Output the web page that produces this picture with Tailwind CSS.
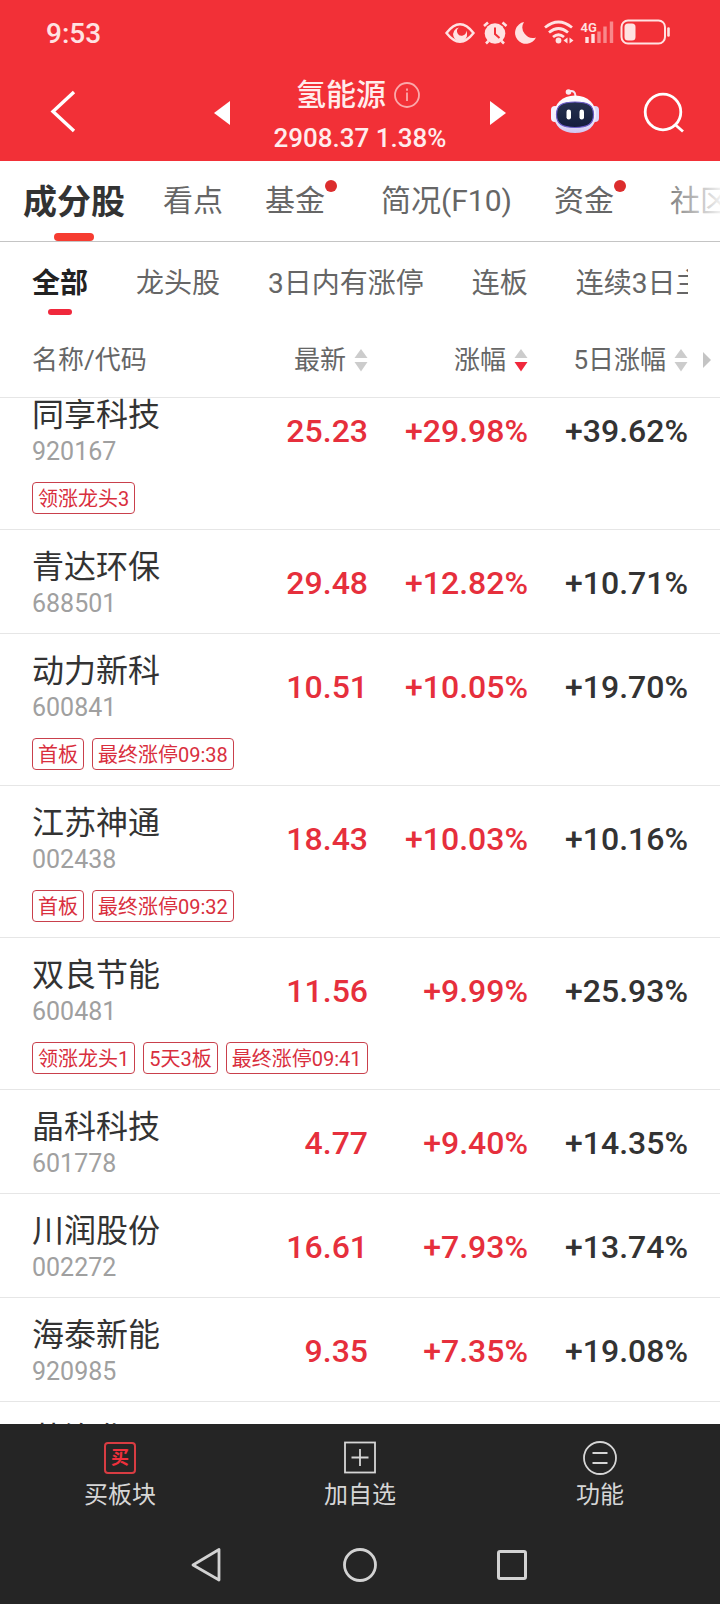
<!DOCTYPE html>
<html lang="zh-CN">
<head>
<meta charset="utf-8">
<meta name="viewport" content="width=device-width, initial-scale=1">
<title>氢能源</title>
<script src="https://cdn.jsdelivr.net/npm/@tailwindcss/browser@4"></script>
</head>
<body class="flex h-screen flex-col overflow-hidden bg-white font-['Roboto','Noto_Sans_CJK_SC',sans-serif] text-[#333]">

<header class="shrink-0 bg-[#f23037] text-[#ffecec]">
  <!-- status bar -->
  <div class="flex h-16 items-center justify-between pt-1 pr-[50px] pl-[46px]">
    <time class="text-[28px] leading-8 font-medium text-[#ffe2e2]">9:53</time>
    <svg class="h-8 w-[226px]" viewBox="444 18 226 32" fill="none" stroke="#ffe2e2" aria-label="状态图标">
      <path d="M446.500 33Q460 15.500 473.500 33Q460 50.500 446.500 33Z" stroke-width="2.400"/>
      <path d="M459 27.500a7 7 0 1 0 7 3a4.500 4.500 0 1 1-7-3Z" fill="#ffe2e2" stroke="none"/>
      <circle cx="495" cy="33.500" r="10.300" fill="#ffe2e2" stroke="none"/>
      <path d="M484 26l4-3.500M506.500 26l-4-3.500M488.500 41l-2.500 2.500M501.500 41l2.500 2.500" stroke-width="2.600"/>
      <path d="M495 27.500v6.500l4.500 4" stroke="#f23037" stroke-width="2"/>
      <path d="M524 22a11 11 0 1 0 12 15.500a10.500 10.500 0 0 1-12-15.500Z" fill="#ffe2e2" stroke="none"/>
      <path d="M545 27.500Q558.500 16.500 572 27.500M549 32.500Q558.500 24.500 568 32.500M553 37Q558.500 32.500 564 37" stroke-width="2.800"/>
      <circle cx="558.500" cy="40.500" r="2.900" fill="#ffe2e2" stroke="none"/>
      <path d="M567.500 37.500v6l-4-3ZM569.500 37.500v6l4-3Z" fill="#ffe2e2" stroke="none"/>
      <text x="580.500" y="32" font-size="13" font-weight="600" fill="#ffe2e2" stroke="none">4G</text>
      <path d="M587 37v6M593 34v9" stroke-width="3.400"/>
      <path d="M599 31.500v11.500M605 26.500v16.500M611.500 21.500v21.500" stroke="#f8888b" stroke-width="3.400"/>
      <rect x="621.500" y="20.500" width="43.500" height="23" rx="6.500" stroke-width="2"/>
      <rect x="624.500" y="23.500" width="11" height="17" rx="3.500" fill="#ffe2e2" stroke="none"/>
      <path d="M668.500 28.500v7" stroke-width="2.600" stroke-linecap="round"/>
    </svg>
  </div>
  <!-- title bar -->
  <div class="grid h-[97px] grid-cols-[1fr_auto_1fr] items-start">
    <button class="mt-6 ml-12 h-12 w-8" aria-label="返回">
      <svg class="h-12 w-8" viewBox="0 0 32 48" fill="none" stroke="#fff" stroke-width="3.400"><path d="M26 4L5 23.500L26 43"/></svg>
    </button>
    <div class="flex items-start">
      <button class="mt-[37px] mr-[42px] h-6 w-4" aria-label="上一个"><svg class="h-6 w-4" viewBox="0 0 16 24" fill="#fff"><path d="M16 0V24L0 12Z"/></svg></button>
      <div class="flex w-44 flex-col items-center">
        <h1 class="mt-[13px] ml-6 flex items-center gap-2 self-start text-[30px] leading-9 font-medium">
          氢能源
          <svg class="size-[26px]" viewBox="0 0 26 26" fill="none" stroke="#fba9ab" stroke-width="1.800" aria-label="说明"><circle cx="13" cy="13" r="12"/><path d="M13 10.500v8.500M13 6.500v2.200"/></svg>
        </h1>
        <p class="mt-[9px] text-[26px] leading-8 font-medium whitespace-nowrap">2908.37 1.38%</p>
      </div>
      <button class="mt-[37px] ml-[42px] h-6 w-4" aria-label="下一个"><svg class="h-6 w-4" viewBox="0 0 16 24" fill="#fff"><path d="M0 0V24L16 12Z"/></svg></button>
    </div>
    <div class="mt-[22px] flex items-start justify-end gap-[42px] pr-[34px]">
      <button class="h-12 w-[50px]" aria-label="智能助手">
        <svg class="h-12 w-[50px]" viewBox="0 0 50 48" fill="none">
          <defs>
            <linearGradient id="shell" x1="0" y1="0" x2="0" y2="1"><stop offset="0" stop-color="#fff"/><stop offset=".6" stop-color="#f1edfb"/><stop offset="1" stop-color="#cfc6f2"/></linearGradient>
            <linearGradient id="visor" x1="0" y1="0" x2="0" y2="1"><stop offset="0" stop-color="#26314f"/><stop offset="1" stop-color="#141c3c"/></linearGradient>
          </defs>
          <path d="M19 5.500Q25 3.500 25.500 10" stroke="#f5e6f2" stroke-width="2"/>
          <circle cx="18.500" cy="6" r="2.800" fill="#fbe9f0"/>
          <rect x="1" y="20" width="8" height="16" rx="4" fill="#f3f0ff"/>
          <rect x="41" y="20" width="8" height="16" rx="4" fill="#dcd8fb"/>
          <path d="M25 9.500C38 9.500 46 18 46 29S38 47 25 47S4 40 4 29S12 9.500 25 9.500Z" fill="url(#shell)"/>
          <path d="M25 16C38 16 43.500 19 43.500 28.500S38 41.500 25 41.500S6.500 38 6.500 28.500S12 16 25 16Z" fill="url(#visor)" stroke="#6a5ac8" stroke-width="1.200"/>
          <rect x="16.500" y="23.500" width="4.500" height="10" rx="2.200" fill="#fff"/>
          <rect x="29.500" y="23.500" width="4.500" height="10" rx="2.200" fill="#fff"/>
        </svg>
      </button>
      <button class="mt-1 size-11" aria-label="搜索">
        <svg class="size-11" viewBox="0 0 44 44" fill="none" stroke="#fff" stroke-width="2.800"><circle cx="21" cy="22" r="17.800"/><path d="M33 34.500L41 41.500"/></svg>
      </button>
    </div>
  </div>
</header>

<!-- main tabs -->
<nav class="relative flex h-[81px] shrink-0 items-start gap-[42px] overflow-hidden border-b border-[#c4c4c4] pl-[23px] text-[30px] leading-10 whitespace-nowrap text-[#666]">
  <a href="#" class="-mr-1 flex h-20 shrink-0 flex-col items-center justify-between pt-[21px] text-[34px] font-bold text-[#333]">成分股<span class="h-2 w-10 rounded-full bg-[#f63c31]"></span></a>
  <a href="#" class="shrink-0 pt-5">看点</a>
  <a href="#" class="relative shrink-0 pt-5 pr-3.5">基金<i class="absolute top-[19px] right-0.5 size-3 rounded-full bg-[#dc2d2d]"></i></a>
  <a href="#" class="shrink-0 pt-5">简况(F10)</a>
  <a href="#" class="relative shrink-0 pt-5 pr-3.5">资金<i class="absolute top-[19px] right-0.5 size-3 rounded-full bg-[#dc2d2d]"></i></a>
  <a href="#" class="shrink-0 pt-5">社区</a>
  <span class="pointer-events-none absolute inset-y-0 right-0 w-14 bg-linear-to-r from-white/10 to-white/90"></span>
</nav>

<!-- filter tabs -->
<nav class="mx-8 flex h-20 shrink-0 items-start gap-12 overflow-hidden text-[28px] leading-9 whitespace-nowrap text-[#666]">
  <a href="#" class="flex h-[73px] shrink-0 flex-col items-center justify-between pt-6 font-bold text-[#222]">全部<span class="h-1.5 w-6 rounded-sm bg-[#f0283c]"></span></a>
  <a href="#" class="shrink-0 pt-6">龙头股</a>
  <a href="#" class="shrink-0 pt-6">3日内有涨停</a>
  <a href="#" class="shrink-0 pt-6">连板</a>
  <a href="#" class="shrink-0 pt-6">连续3日主力</a>
</nav>

<main class="min-h-0 flex-1 overflow-hidden">
  <table class="w-full table-fixed border-separate border-spacing-0">
    <colgroup><col><col class="w-[160px]"><col class="w-[160px]"><col class="w-[192px]"></colgroup>
    <thead class="text-[26px] leading-8 whitespace-nowrap text-[#666]">
      <tr class="h-[76px]">
        <th class="border-b border-[#e6e6e6] pl-8 text-left font-normal">名称/代码</th>
        <th class="border-b border-[#e6e6e6] font-normal"><button class="ml-auto flex items-center gap-2">最新<svg class="h-6 w-3.5" viewBox="0 0 14 24" fill="#ccc"><path d="M0.500 10L7 1L13.500 10Z"/><path d="M0.500 14L7 23.500L13.500 14Z"/></svg></button></th>
        <th class="border-b border-[#e6e6e6] font-normal" aria-sort="descending"><button class="ml-auto flex items-center gap-2">涨幅<svg class="h-6 w-3.5" viewBox="0 0 14 24" fill="#ccc"><path d="M0.500 10L7 1L13.500 10Z"/><path d="M0.500 14L7 23.500L13.500 14Z" fill="#f0283c"/></svg></button></th>
        <th class="border-b border-[#e6e6e6] pr-2 font-normal"><div class="flex items-center justify-end gap-3.5"><button class="flex items-center gap-2">5日涨幅<svg class="h-6 w-3.5" viewBox="0 0 14 24" fill="#ccc"><path d="M0.500 10L7 1L13.500 10Z"/><path d="M0.500 14L7 23.500L13.500 14Z"/></svg></button><svg class="h-4 w-2.5" viewBox="0 0 10 16" fill="#c4c4c4"><path d="M1 0V16L9 8Z"/></svg></div></th>
      </tr>
    </thead>
    <tbody id="stocks" class="align-top whitespace-nowrap"></tbody>
  </table>
</main>

<footer class="shrink-0 bg-[#252525] text-[#d6d6d6]">
  <div class="grid h-24 grid-cols-3 text-2xl leading-8">
    <button class="flex flex-col items-center gap-1 pt-[17px]">
      <span class="flex size-[34px] items-center justify-center"><span class="flex size-8 items-center justify-center rounded-sm border-2 border-[#d83c42] text-[18px] leading-5 font-bold text-[#f0303c]">买</span></span>买板块</button>
    <button class="flex flex-col items-center gap-1 pt-[17px]">
      <svg class="size-[34px]" viewBox="0 0 34 34" fill="none" stroke="#d6d6d6" stroke-width="1.800"><rect x="2" y="1.500" width="30" height="30"/><path d="M17 8v17M8.500 16.500h17"/></svg>加自选</button>
    <button class="flex flex-col items-center gap-1 pt-[17px]">
      <svg class="size-[34px]" viewBox="0 0 34 34" fill="none" stroke="#d6d6d6" stroke-width="1.800"><circle cx="17" cy="17" r="16"/><path d="M9.500 12h15M9.500 22h15"/></svg>功能</button>
  </div>
  <div class="flex h-[84px] items-center justify-center gap-[117px] pt-1.5">
    <button aria-label="系统返回"><svg class="size-9" viewBox="0 0 36 36" fill="none" stroke="#d2d2d2" stroke-width="2.800" stroke-linejoin="round"><path d="M30 2.500V33L4 18Z"/></svg></button>
    <button aria-label="主屏幕"><svg class="size-9" viewBox="0 0 36 36" fill="none" stroke="#d2d2d2" stroke-width="2.800"><circle cx="18" cy="18" r="15.500"/></svg></button>
    <button aria-label="最近任务"><svg class="size-9" viewBox="0 0 36 36" fill="none" stroke="#d2d2d2" stroke-width="3"><rect x="3.500" y="4.500" width="27" height="27" rx="1.500"/></svg></button>
  </div>
</footer>

<script>
const stocks = [
  ['同享科技', '920167', '25.23', '+29.98%', '+39.62%', ['领涨龙头3']],
  ['青达环保', '688501', '29.48', '+12.82%', '+10.71%', []],
  ['动力新科', '600841', '10.51', '+10.05%', '+19.70%', ['首板', '最终涨停09:38']],
  ['江苏神通', '002438', '18.43', '+10.03%', '+10.16%', ['首板', '最终涨停09:32']],
  ['双良节能', '600481', '11.56', '+9.99%', '+25.93%', ['领涨龙头1', '5天3板', '最终涨停09:41']],
  ['晶科科技', '601778', '4.77', '+9.40%', '+14.35%', []],
  ['川润股份', '002272', '16.61', '+7.93%', '+13.74%', []],
  ['海泰新能', '920985', '9.35', '+7.35%', '+19.08%', []],
  ['英洛华', '', '', '', '', []],
];
document.getElementById('stocks').innerHTML = stocks.map(([name, code, price, change, five, tags], i) => {
  const row = i ? 'h-[104px]' : 'h-[84px]';
  const namePad = i ? 'pt-[21px]' : 'pt-px';
  const numPad = i ? 'pt-[35px]' : 'pt-[15px]';
  const line = tags.length ? '' : 'border-b border-[#e6e6e6]';
  return `<tr class="${row}">
    <td class="pl-8 ${namePad} ${line}"><div class="text-[32px] leading-8">${name}</div><div class="mt-[7px] text-[25px] leading-7 text-[#a0a0a0]">${code}</div></td>
    <td class="text-right text-[32px] leading-9 font-medium text-[#e62f3c] ${numPad} ${line}">${price}</td>
    <td class="text-right text-[32px] leading-9 font-medium text-[#e62f3c] ${numPad} ${line}">${change}</td>
    <td class="pr-8 text-right text-[32px] leading-9 font-medium ${numPad} ${line}">${five}</td>
  </tr>` + (tags.length ? `<tr><td colspan="4" class="border-b border-[#e6e6e6] px-8 pb-[15px]"><div class="flex gap-2">${
    tags.map(t => `<span class="h-8 rounded-sm border border-[#c9404c] px-[5px] pt-px text-xl leading-[30px] text-[#d92f3e]">${t}</span>`).join('')
  }</div></td></tr>` : '');
}).join('');
</script>
</body>
</html>
